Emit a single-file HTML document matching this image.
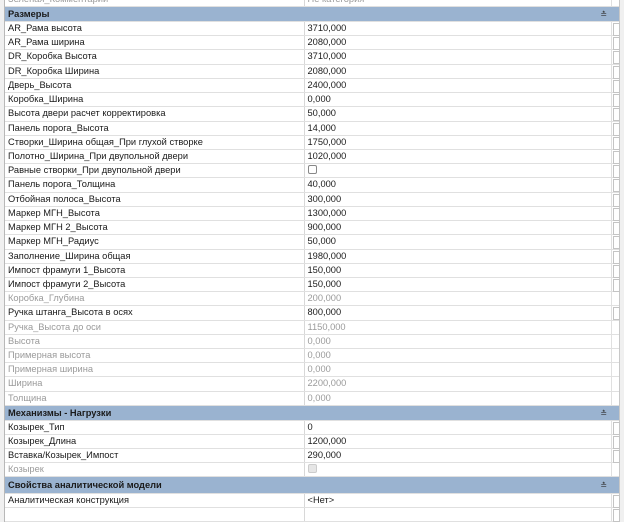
<!DOCTYPE html>
<html><head><meta charset="utf-8"><style>
*{margin:0;padding:0;box-sizing:border-box}
body{width:624px;height:512px;background:#f0f0f0;overflow:hidden;position:relative;font-family:"Liberation Sans","DejaVu Sans",sans-serif;font-size:9.3px;color:#1a1a1a}
#t{position:absolute;left:4px;top:-7px;width:616px;background:#fff;border-left:1px solid #b8b8b8;border-right:1px solid #c8c8c8}
.r{height:14.22px;position:relative;border-bottom:1px solid #e0e0e0;display:flex;line-height:13px}
.s2 .r{height:14px}
.r .a{width:300px;padding-left:3px;border-right:1px solid #d8d8d8;white-space:nowrap;overflow:hidden}
.r .b{width:307px;padding-left:3px;white-space:nowrap}
.r .c{width:8px;border-left:1px solid #e0e0e0;position:relative}
.r .c::after{content:"";position:absolute;left:1px;top:1px;width:5px;height:11px;border:1px solid #c4c4c4;background:#fff}
.r.g{color:#9a9a9a}.r.g .c::after{display:none}
.h{height:15px;background:#9ab3d0;font-weight:bold;line-height:15px;padding-left:3px;position:relative;border-bottom:1px solid #e0e0e0}
.h::after{content:"≛";position:absolute;right:12px;top:0;font-size:8px;color:#333;font-weight:normal}
.h.x{height:17px;line-height:17px}
.cb{display:inline-block;width:9px;height:9px;border:1px solid #888;border-radius:2px;vertical-align:middle;margin-top:-2px}
.cb.d{border-color:#ccc;background:#e6e6e6}
</style></head><body>
<div id="t">
<div class="r g" style="height:14px"><div class="a">Зеленая_Комментарий</div><div class="b">Не категория</div><div class="c"></div></div>
<div class="h">Размеры</div>
<div class="r"><div class="a">AR_Рама высота</div><div class="b">3710,000</div><div class="c"></div></div>
<div class="r"><div class="a">AR_Рама ширина</div><div class="b">2080,000</div><div class="c"></div></div>
<div class="r"><div class="a">DR_Коробка Высота</div><div class="b">3710,000</div><div class="c"></div></div>
<div class="r"><div class="a">DR_Коробка Ширина</div><div class="b">2080,000</div><div class="c"></div></div>
<div class="r"><div class="a">Дверь_Высота</div><div class="b">2400,000</div><div class="c"></div></div>
<div class="r"><div class="a">Коробка_Ширина</div><div class="b">0,000</div><div class="c"></div></div>
<div class="r"><div class="a">Высота двери расчет корректировка</div><div class="b">50,000</div><div class="c"></div></div>
<div class="r"><div class="a">Панель порога_Высота</div><div class="b">14,000</div><div class="c"></div></div>
<div class="r"><div class="a">Створки_Ширина общая_При глухой створке</div><div class="b">1750,000</div><div class="c"></div></div>
<div class="r"><div class="a">Полотно_Ширина_При двупольной двери</div><div class="b">1020,000</div><div class="c"></div></div>
<div class="r"><div class="a">Равные створки_При двупольной двери</div><div class="b"><span class="cb"></span></div><div class="c"></div></div>
<div class="r"><div class="a">Панель порога_Толщина</div><div class="b">40,000</div><div class="c"></div></div>
<div class="r"><div class="a">Отбойная полоса_Высота</div><div class="b">300,000</div><div class="c"></div></div>
<div class="r"><div class="a">Маркер МГН_Высота</div><div class="b">1300,000</div><div class="c"></div></div>
<div class="r"><div class="a">Маркер МГН 2_Высота</div><div class="b">900,000</div><div class="c"></div></div>
<div class="r"><div class="a">Маркер МГН_Радиус</div><div class="b">50,000</div><div class="c"></div></div>
<div class="r"><div class="a">Заполнение_Ширина общая</div><div class="b">1980,000</div><div class="c"></div></div>
<div class="r"><div class="a">Импост фрамуги 1_Высота</div><div class="b">150,000</div><div class="c"></div></div>
<div class="r"><div class="a">Импост фрамуги 2_Высота</div><div class="b">150,000</div><div class="c"></div></div>
<div class="r g"><div class="a">Коробка_Глубина</div><div class="b">200,000</div><div class="c"></div></div>
<div class="r"><div class="a">Ручка штанга_Высота в осях</div><div class="b">800,000</div><div class="c"></div></div>
<div class="r g"><div class="a">Ручка_Высота до оси</div><div class="b">1150,000</div><div class="c"></div></div>
<div class="r g"><div class="a">Высота</div><div class="b">0,000</div><div class="c"></div></div>
<div class="r g"><div class="a">Примерная высота</div><div class="b">0,000</div><div class="c"></div></div>
<div class="r g"><div class="a">Примерная ширина</div><div class="b">0,000</div><div class="c"></div></div>
<div class="r g"><div class="a">Ширина</div><div class="b">2200,000</div><div class="c"></div></div>
<div class="r g"><div class="a">Толщина</div><div class="b">0,000</div><div class="c"></div></div>
<div class="s2">
<div class="h">Механизмы - Нагрузки</div>
<div class="r"><div class="a">Козырек_Тип</div><div class="b">0</div><div class="c"></div></div>
<div class="r"><div class="a">Козырек_Длина</div><div class="b">1200,000</div><div class="c"></div></div>
<div class="r"><div class="a">Вставка/Козырек_Импост</div><div class="b">290,000</div><div class="c"></div></div>
<div class="r g"><div class="a">Козырек</div><div class="b"><span class="cb d"></span></div><div class="c"></div></div>
<div class="h x">Свойства аналитической модели</div>
<div class="r"><div class="a">Аналитическая конструкция</div><div class="b">&lt;Нет&gt;</div><div class="c"></div></div>
<div class="r"><div class="a"></div><div class="b"></div><div class="c"></div></div>
</div>
</div>
</body></html>
